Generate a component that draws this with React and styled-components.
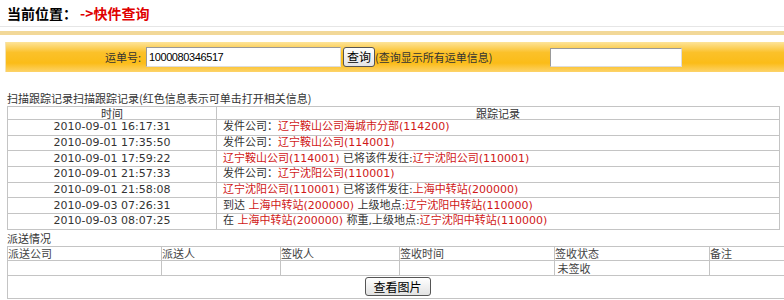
import React from "react";
import styled, { createGlobalStyle } from "styled-components";

const GlobalStyle = createGlobalStyle`
  body {
    margin: 0;
    background: #fff;
    font-family: "DejaVu Sans", "Noto Sans CJK SC", sans-serif;
    font-size: 11px;
    color: #333;
  }
`;

const tracks = [
  {
    time: "2010-09-01 16:17:31",
    parts: [["发件公司：", false], ["辽宁鞍山公司海城市分部(114200)", true]],
  },
  {
    time: "2010-09-01 17:35:50",
    parts: [["发件公司：", false], ["辽宁鞍山公司(114001)", true]],
  },
  {
    time: "2010-09-01 17:59:22",
    parts: [
      ["辽宁鞍山公司(114001)", true],
      [" 已将该件发往:", false],
      ["辽宁沈阳公司(110001)", true],
    ],
  },
  {
    time: "2010-09-01 21:57:33",
    parts: [["发件公司：", false], ["辽宁沈阳公司(110001)", true]],
  },
  {
    time: "2010-09-01 21:58:08",
    parts: [
      ["辽宁沈阳公司(110001)", true],
      [" 已将该件发往:", false],
      ["上海中转站(200000)", true],
    ],
  },
  {
    time: "2010-09-03 07:26:31",
    parts: [
      ["到达 ", false],
      ["上海中转站(200000)", true],
      [" 上级地点:", false],
      ["辽宁沈阳中转站(110000)", true],
    ],
  },
  {
    time: "2010-09-03 08:07:25",
    parts: [
      ["在 ", false],
      ["上海中转站(200000)", true],
      [" 称重,上级地点:", false],
      ["辽宁沈阳中转站(110000)", true],
    ],
  },
];

const deliveryCols = [
  { label: "派送公司", width: 153, value: "" },
  { label: "派送人", width: 118, value: "" },
  { label: "签收人", width: 118, value: "" },
  { label: "签收时间", width: 154, value: "" },
  { label: "签收状态", width: 154, value: "未签收" },
  { label: "备注", width: 77, value: "" },
];

const App = () => {
  return (
    <Page>
      <GlobalStyle />
      <TitleBar>
        <Location>当前位置：</Location>
        <Current>-&gt;快件查询</Current>
      </TitleBar>
      <TanRule />

      <SearchBar>
        <Label>运单号:</Label>
        <NumberInput type="text" defaultValue="1000080346517" />
        <QueryButton>查询</QueryButton>
        <Hint>(查询显示所有运单信息)</Hint>
        <ExtraInput type="text" />
      </SearchBar>

      <Caption>扫描跟踪记录扫描跟踪记录(红色信息表示可单击打开相关信息)</Caption>
      <TrackTable>
        <thead>
          <tr>
            <HeadCell style={{ width: 208 }}>时间</HeadCell>
            <HeadCell>跟踪记录</HeadCell>
          </tr>
        </thead>
        <tbody>
          {tracks.map((row) => (
            <tr key={row.time}>
              <TimeCell>{row.time}</TimeCell>
              <RecordCell>
                {row.parts.map(([text, link], i) =>
                  link ? <RedLink key={i}>{text}</RedLink> : <span key={i}>{text}</span>
                )}
              </RecordCell>
            </tr>
          ))}
        </tbody>
      </TrackTable>

      <SubTitle>派送情况</SubTitle>
      <DeliveryTable>
        <tbody>
          <tr>
            {deliveryCols.map((c) => (
              <DeliveryHead key={c.label} style={{ width: c.width }}>
                {c.label}
              </DeliveryHead>
            ))}
          </tr>
          <tr>
            {deliveryCols.map((c) => (
              <DeliveryCell key={c.label}>{c.value ? ` ${c.value}` : ""}</DeliveryCell>
            ))}
          </tr>
          <tr>
            <ButtonCell colSpan={6}>
              <PictureButton>查看图片</PictureButton>
            </ButtonCell>
          </tr>
        </tbody>
      </DeliveryTable>
    </Page>
  );
};

const Page = styled.div`
  width: 784px;
  height: 300px;
  overflow: hidden;
`;

const TitleBar = styled.div`
  display: flex;
  align-items: center;
  height: 26px;
  padding-left: 7px;
  border-bottom: 1px solid #e6e6e6;
  font-family: "Noto Sans CJK SC", sans-serif;
  font-weight: bold;
  font-size: 14px;
`;

const Location = styled.span`
  color: #000;
  width: 73px;
`;

const Current = styled.span`
  color: #e00000;
`;

const TanRule = styled.div`
  margin-top: 4px;
  height: 4px;
  background: #f2d898;
`;

const SearchBar = styled.div`
  display: flex;
  align-items: center;
  margin: 7px 0 0 5px;
  height: 30px;
  border-left: 1px solid #f3e3b5;
  background: linear-gradient(#fde49a 0%, #fbc12a 35%, #fbbc18 70%, #fdd36a 100%);
  font-family: "Noto Sans CJK SC", sans-serif;
  font-size: 11px;
  color: #333;
`;

const Label = styled.span`
  margin-left: 99px;
  width: 41px;
`;

const NumberInput = styled.input`
  box-sizing: border-box;
  width: 195px;
  height: 20px;
  margin: 0;
  padding: 0 2px;
  border: 1px solid #999;
  border-right-color: #ddd;
  border-bottom-color: #ddd;
  font-family: "Liberation Sans", sans-serif;
  font-size: 11px;
  letter-spacing: -0.4px;
  color: #000;
`;

const QueryButton = styled.button`
  box-sizing: border-box;
  height: 20px;
  margin: 0 0 0 2px;
  padding: 0 3px;
  border: 1px solid #555;
  border-radius: 3px;
  background: linear-gradient(#fff, #e4e4e4);
  font-family: "Noto Sans CJK SC", sans-serif;
  font-size: 12px;
  line-height: 16px;
  color: #000;
`;

const Hint = styled.span`
  width: 175px;
  margin-left: 0;
`;

const ExtraInput = styled.input`
  box-sizing: border-box;
  width: 132px;
  height: 19px;
  margin: 0;
  border: 1px solid #999;
  border-right-color: #ddd;
  border-bottom-color: #ddd;
`;

const Caption = styled.div`
  margin: 19px 0 0 7px;
  height: 15px;
  line-height: 14px;
  font-family: "Noto Sans CJK SC", sans-serif;
  font-size: 11px;
`;

const TrackTable = styled.table`
  margin-left: 7px;
  width: 773px;
  border-collapse: collapse;
  border: 1px solid #b8b8b8;
`;

const HeadCell = styled.th`
  height: 12px;
  padding: 0;
  border: 1px solid #c4c4c4;
  font-weight: normal;
  font-family: "Noto Sans CJK SC", sans-serif;
  font-size: 11px;
  line-height: 12px;
  text-align: center;
  color: #333;
`;

const TimeCell = styled.td`
  height: 14.7px;
  padding: 0;
  border: 1px solid #c4c4c4;
  line-height: 14px;
  text-align: center;
  white-space: nowrap;
`;

const RecordCell = styled.td`
  height: 14.7px;
  padding: 0 0 0 6px;
  border: 1px solid #c4c4c4;
  line-height: 14px;
  white-space: nowrap;
`;

const RedLink = styled.span`
  color: #d01818;
`;

const SubTitle = styled.div`
  margin: 2px 0 0 7px;
  height: 14px;
  line-height: 13px;
  font-family: "Noto Sans CJK SC", sans-serif;
  font-size: 11px;
`;

const DeliveryTable = styled.table`
  margin-left: 7px;
  width: 774px;
  table-layout: fixed;
  border-collapse: collapse;
  border: 1px solid #b8b8b8;
  font-family: "Noto Sans CJK SC", sans-serif;
  font-size: 11px;
`;

const DeliveryHead = styled.td`
  height: 13px;
  padding: 0;
  border: 1px solid #c4c4c4;
  line-height: 13px;
  color: #444;
`;

const DeliveryCell = styled.td`
  height: 14px;
  padding: 0;
  border: 1px solid #c4c4c4;
  line-height: 14px;
  color: #444;
  white-space: pre;
`;

const ButtonCell = styled.td`
  height: 22px;
  padding: 0;
  border: 1px solid #c4c4c4;
  text-align: center;
`;

const PictureButton = styled.button`
  box-sizing: border-box;
  height: 19px;
  width: 66px;
  margin: 0;
  padding: 0;
  border: 1px solid #555;
  border-radius: 3px;
  background: linear-gradient(#fff, #e2e2e2);
  font-family: "Noto Sans CJK SC", sans-serif;
  font-size: 12px;
  line-height: 16px;
  color: #000;
`;

export default App;
